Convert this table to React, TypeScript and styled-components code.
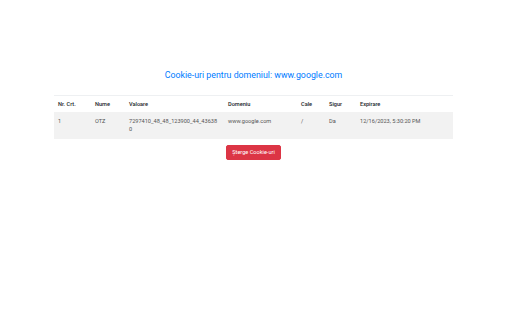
import React from "react";
import styled, { createGlobalStyle } from "styled-components";

const Global = createGlobalStyle`
  html, body { margin: 0; padding: 0; background: #fff; }
  body { font-family: Roboto, "Liberation Sans", sans-serif; color: #212529; }
`;

const Page = styled.div`
  width: 507px;
  display: flex;
  flex-direction: column;
  align-items: center;
  padding-top: 68px;
`;

const Title = styled.h1`
  margin: 0 0 13px;
  font-size: 8.8px;
  font-weight: 400;
  color: #007bff;
  line-height: 14px;
`;

const Table = styled.table`
  width: 399px;
  border-collapse: collapse;
  table-layout: fixed;
  font-size: 5.6px;
  border-top: 1px solid #eef0f2;
`;

const Th = styled.th<{ $w: number }>`
  width: ${(p) => p.$w - 8}px;
  text-align: left;
  font-weight: 500;
  padding: 4px 4px;
  height: 8px;
  line-height: 8px;
  color: #212529;
`;

const Row = styled.tr`
  background: #f2f2f2;
`;

const Td = styled.td`
  padding: 5px 4px 6px;
  vertical-align: top;
  line-height: 8px;
  color: #555;
  word-break: break-all;
`;

const DangerButton = styled.button`
  margin-top: 6px;
  background: #dc3545;
  color: #fff;
  border: 1px solid #dc3545;
  border-radius: 2px;
  font-family: Roboto, "Liberation Sans", sans-serif;
  font-size: 5.6px;
  padding: 3px 5px;
  line-height: 7px;
`;

const cols = [
  { name: "Nr. Crt.", w: 37 },
  { name: "Nume", w: 34 },
  { name: "Valoare", w: 99 },
  { name: "Domeniu", w: 73 },
  { name: "Cale", w: 28 },
  { name: "Sigur", w: 31 },
  { name: "Expirare", w: 97 },
];

const values = [
  "1",
  "OTZ",
  "7297410_48_48_123900_44_436380",
  "www.google.com",
  "/",
  "Da",
  "12/16/2023, 5:30:20 PM",
];

export default function App() {
  return (
    <>
      <Global />
      <Page>
        <Title>Cookie-uri pentru domeniul: www.google.com</Title>
        <Table>
          <thead>
            <tr>
              {cols.map((c) => (
                <Th key={c.name} $w={c.w}>
                  {c.name}
                </Th>
              ))}
            </tr>
          </thead>
          <tbody>
            <Row>
              {values.map((v, i) => (
                <Td key={i}>{v}</Td>
              ))}
            </Row>
          </tbody>
        </Table>
        <DangerButton>Șterge Cookie-uri</DangerButton>
      </Page>
    </>
  );
}
